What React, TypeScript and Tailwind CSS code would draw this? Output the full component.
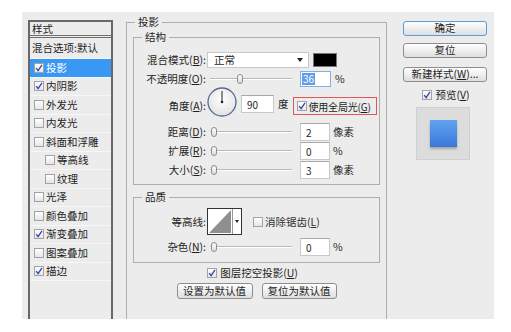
import React from 'react';

const items = [
  { label: '投影', checked: true, active: true },
  { label: '内阴影', checked: true },
  { label: '外发光' },
  { label: '内发光' },
  { label: '斜面和浮雕' },
  { label: '等高线', sub: true },
  { label: '纹理', sub: true },
  { label: '光泽' },
  { label: '颜色叠加' },
  { label: '渐变叠加', checked: true },
  { label: '图案叠加' },
  { label: '描边', checked: true },
];

function Check({ checked }: { checked?: boolean }) {
  return (
    <span className="w-[10px] h-[10px] border border-[#a3a3a3] bg-linear-to-b from-white to-[#e6e6e6] flex items-center justify-center shrink-0">
      {checked && (
        <svg width="8" height="8" viewBox="0 0 8 8">
          <path d="M1.2 4.2 L3.1 6.6 L7 0.8" stroke="#2c45b0" strokeWidth="1.3" fill="none" />
        </svg>
      )}
    </span>
  );
}

function Slider({ thumb }: { thumb: string }) {
  return (
    <div className="relative w-[82px] h-[10px] flex items-center shrink-0">
      <div className="w-full h-[2px] bg-[#b9b9b9] border-b border-white" />
      <div className={`absolute top-0 w-[6px] h-[10px] rounded-[3px] border border-[#8c8c8c] bg-linear-to-b from-white to-[#dcdcdc] ${thumb}`} />
    </div>
  );
}

function Field({ value, className = '' }: { value: string; className?: string }) {
  return (
    <div className={`h-[18px] bg-white border border-[#c9c9c9] border-t-[#a9a9a9] flex items-center pl-[5px] text-[10px] shrink-0 ${className}`}>
      {value}
    </div>
  );
}

function Label({ children, className = '' }: { children: React.ReactNode; className?: string }) {
  return <div className={`w-[72px] text-right shrink-0 ${className}`}>{children}</div>;
}

function Group({ title, className = '', children }: { title: string; className?: string; children: React.ReactNode }) {
  return (
    <div className={`relative border border-[#aeaeae] ${className}`}>
      <span className="absolute -top-[8px] bg-[#ececec] px-[3px] leading-[14px] left-[8px]">{title}</span>
      {children}
    </div>
  );
}

function Button({ children, primary }: { children: React.ReactNode; primary?: boolean }) {
  return (
    <div
      className={`h-[15px] flex items-center justify-center rounded-[3px] border bg-linear-to-b from-white to-[#dedede] leading-none ${
        primary ? 'border-[#5a9cd8]' : 'border-[#8e8e8e]'
      }`}
    >
      {children}
    </div>
  );
}

export default function App() {
  return (
    <div className="w-[511px] h-[332px] bg-white pt-[12px] pl-[22px] whitespace-nowrap font-['Noto_Sans_CJK_SC','Noto_Sans',sans-serif] text-[10.5px] text-[#1e1e1e]">
      <div className="w-[472px] h-[307px] bg-[#ececec] flex items-start overflow-hidden">
        {/* style list */}
        <div className="ml-[6px] mt-[8px] w-[85px] h-[320px] border-2 border-[#686868] shrink-0">
          <div className="h-[16px] flex items-center pl-[2px] border-b-[3px] border-double border-[#6e6e6e]">样式</div>
          <div className="h-[21px] flex items-center pl-[2px] border-b border-[#f7f7f7]">混合选项:默认</div>
          {items.map((it) => (
            <div
              key={it.label}
              className={`h-[18.5px] flex items-center gap-[2px] border-b border-[#f7f7f7] ${it.sub ? 'pl-[15px]' : 'pl-[4px]'} ${
                it.active ? 'bg-[#3a98f5] text-white' : ''
              }`}
            >
              <Check checked={it.checked} />
              <span>{it.label}</span>
            </div>
          ))}
        </div>

        {/* main panel */}
        <Group title="投影" className="ml-[13px] mt-[10px] w-[261px] h-[320px] px-[6px] pt-[14px] shrink-0">
          <Group title="结构" className="h-[148px] pt-[14px]">
            <div className="h-[16px] flex items-center">
              <Label>
                混合模式(<u>B</u>):
              </Label>
              <div className="ml-[1px] w-[102px] h-[16px] bg-white border border-[#c9c9c9] flex items-center justify-between pl-[6px] pr-[5px]">
                <span>正常</span>
                <svg width="6" height="4" viewBox="0 0 6 4">
                  <path d="M0 0 H6 L3 4 Z" fill="#222" />
                </svg>
              </div>
              <div className="ml-[4px] w-[24px] h-[14px] bg-black border border-[#777]" />
            </div>
            <div className="mt-[3px] h-[16px] flex items-center">
              <Label>
                不透明度(<u>O</u>):
              </Label>
              <div className="ml-[4px]">
                <Slider thumb="left-[27px]" />
              </div>
              <div className="ml-[8px] w-[31px] h-[16px] bg-white border border-[#7fb0e4] flex items-center pl-[1px] text-[10px] shrink-0">
                <span className="bg-[#5d9ee9] text-white px-[1px] leading-[12px]">36</span>
              </div>
              <span className="ml-[4px]">%</span>
            </div>
            <div className="h-[30px] flex items-end">
              <Label className="mb-[3px]">
                角度(<u>A</u>):
              </Label>
              <svg width="30" height="30" viewBox="0 0 30 30" className="ml-[1px] shrink-0">
                <defs>
                  <radialGradient id="dial" cx="50%" cy="40%" r="60%">
                    <stop offset="0" stopColor="#ffffff" />
                    <stop offset="1" stopColor="#e2e2e2" />
                  </radialGradient>
                </defs>
                <circle cx="15" cy="15" r="14" fill="url(#dial)" stroke="#56698f" strokeWidth="1.3" />
                <line x1="15" y1="15" x2="15" y2="4" stroke="#222" strokeWidth="1" />
                <circle cx="15" cy="15" r="1.3" fill="#222" />
              </svg>
              <Field value="90" className="ml-[4px] w-[33px] h-[17px] mb-[4px]" />
              <span className="ml-[4px] mb-[5px]">度</span>
              <div className="ml-[4px] mb-[2px] w-[84px] h-[18px] border border-[#e0575a] flex items-center gap-[2px] pl-[3px] overflow-hidden">
                <Check checked />
                <span className="text-[10px] tracking-[-0.2px]">
                  使用全局光(<u>G</u>)
                </span>
              </div>
            </div>
            {[
              { label: '距离', key: 'D', value: '2', unit: '像素', mt: 'mt-[6px]' },
              { label: '扩展', key: 'R', value: '0', unit: '%', mt: 'mt-[1px]' },
              { label: '大小', key: 'S', value: '3', unit: '像素', mt: 'mt-[1px]' },
            ].map((r) => (
              <div key={r.key} className={`h-[18px] flex items-center ${r.mt}`}>
                <Label>
                  {r.label}(<u>{r.key}</u>):
                </Label>
                <div className="ml-[4px]">
                  <Slider thumb="left-[1px]" />
                </div>
                <Field value={r.value} className="ml-[8px] w-[30px]" />
                <span className="ml-[3px]">{r.unit}</span>
              </div>
            ))}
          </Group>

          <Group title="品质" className="mt-[12px] h-[66px] pt-[10px]">
            <div className="h-[27px] flex items-center">
              <Label>等高线:</Label>
              <svg width="35" height="27" viewBox="0 0 35 27" className="ml-[1px] shrink-0">
                <rect x="0.5" y="0.5" width="34" height="26" fill="#fff" stroke="#333" />
                <polygon points="2,25 24,2 24,25" fill="#8f8f8f" />
                <line x1="25.5" y1="1" x2="25.5" y2="26" stroke="#999" />
                <path d="M28 12 H32 L30 15 Z" fill="#222" />
              </svg>
              <div className="ml-[11px] flex items-center gap-[2px]">
                <Check />
                <span className="text-[#333]">
                  消除锯齿(<u>L</u>)
                </span>
              </div>
            </div>
            <div className="mt-[4px] h-[16px] flex items-center">
              <Label>
                杂色(<u>N</u>):
              </Label>
              <div className="ml-[4px]">
                <Slider thumb="left-[1px]" />
              </div>
              <Field value="0" className="ml-[8px] w-[30px] h-[16px]" />
              <span className="ml-[3px]">%</span>
            </div>
          </Group>

          <div className="mt-[3px] h-[14px] flex items-center justify-center gap-[3px] pr-[8px]">
            <Check checked />
            <span>
              图层挖空投影(<u>U</u>)
            </span>
          </div>
          <div className="mt-[3px] flex justify-center gap-[9px]">
            <div className="w-[76px] h-[16px] flex items-center justify-center rounded-[3px] border border-[#8e8e8e] bg-linear-to-b from-white to-[#dedede]">
              设置为默认值
            </div>
            <div className="w-[75px] h-[16px] flex items-center justify-center rounded-[3px] border border-[#8e8e8e] bg-linear-to-b from-white to-[#dedede]">
              复位为默认值
            </div>
          </div>
        </Group>

        {/* right column */}
        <div className="ml-[16px] mt-[9px] w-[84px] shrink-0 flex flex-col">
          <Button primary>确定</Button>
          <div className="mt-[7px]">
            <Button>复位</Button>
          </div>
          <div className="mt-[9px]">
            <Button>
              新建样式(<u>W</u>)...
            </Button>
          </div>
          <div className="mt-[7px] h-[12px] flex items-center justify-center gap-[3px] pl-[2px]">
            <Check checked />
            <span>
              预览(<u>V</u>)
            </span>
          </div>
          <div className="mt-[6px] ml-[13px] w-[54px] h-[53px] bg-[#dcdcdc] border border-[#cfcfcf] flex items-center justify-center">
            <div className="w-[27px] h-[27px] bg-linear-to-b from-[#62a2ee] to-[#3a78d9] shadow-[0_2px_2px_rgba(0,0,0,0.25)]" />
          </div>
        </div>
      </div>
    </div>
  );
}
